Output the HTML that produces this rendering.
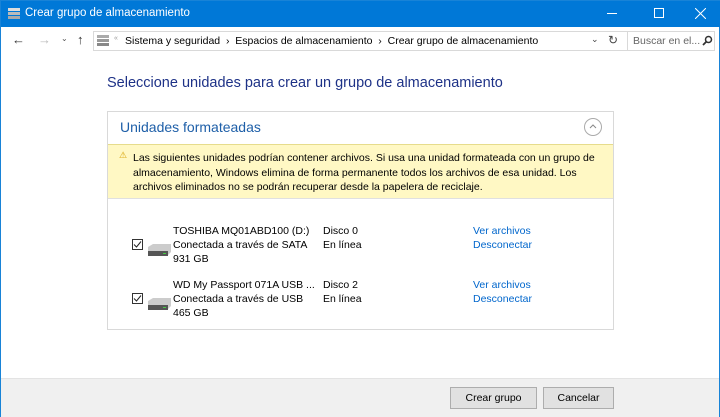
<!DOCTYPE html>
<html><head><meta charset="utf-8"><style>
*{margin:0;padding:0;box-sizing:border-box}
body{width:720px;height:417px;overflow:hidden;font-family:"Liberation Sans",sans-serif;font-size:10.5px;color:#000;background:#fff;position:relative;border:1px solid #1883d7}
.a{position:absolute;white-space:nowrap}
</style></head><body>
<div class="a" style="left:0;top:0;width:720px;height:26px;background:#0078d7"></div>
<svg class="a" style="left:6px;top:6px" width="14" height="14"><rect x="1" y="1" width="12" height="3" fill="#ddd"/><rect x="1" y="5" width="12" height="3" fill="#bbb"/><rect x="1" y="9" width="12" height="3" fill="#aaa"/></svg>
<div class="a" style="left:24px;top:6px;color:#fff;font-size:11.5px">Crear grupo de almacenamiento</div>
<div class="a" style="left:606px;top:12px;width:10px;height:1px;background:#fff"></div>
<div class="a" style="left:653px;top:7px;width:10px;height:10px;border:1px solid #fff"></div>
<svg class="a" style="left:694px;top:7px" width="11" height="11"><path d="M0 0L11 11M11 0L0 11" stroke="#fff" stroke-width="1"/></svg>
<div class="a" style="left:11px;top:31px;font-size:13px;color:#333">←</div>
<div class="a" style="left:37px;top:31px;font-size:13px;color:#bbb">→</div>
<div class="a" style="left:60px;top:33px;font-size:8px;color:#555">⌄</div>
<div class="a" style="left:76px;top:31px;font-size:13px;color:#333">↑</div>
<div class="a" style="left:92px;top:30px;width:535px;height:20px;border:1px solid #d9d9d9"></div>
<svg class="a" style="left:94px;top:32px" width="16" height="16"><rect x="2" y="2" width="12" height="3" fill="#aaa"/><rect x="2" y="6" width="12" height="3" fill="#999"/><rect x="2" y="10" width="12" height="3" fill="#888"/></svg>
<div class="a" style="left:113px;top:34px;font-size:7px;color:#999">«</div>
<div class="a" style="left:124px;top:34px;font-size:10.5px">Sistema y seguridad &nbsp;›&nbsp; Espacios de almacenamiento &nbsp;›&nbsp; Crear grupo de almacenamiento</div>
<div class="a" style="left:590px;top:33px;font-size:9px;color:#444">⌄</div>
<div class="a" style="left:607px;top:32px;font-size:12px;color:#444">↻</div>
<div class="a" style="left:626px;top:30px;width:88px;height:20px;border:1px solid #d9d9d9"></div>
<div class="a" style="left:632px;top:34px;color:#666">Buscar en el...</div>
<svg class="a" style="left:701px;top:34px" width="11" height="11"><circle cx="6.5" cy="4.5" r="3" stroke="#333" stroke-width="1.5" fill="none"/><path d="M4.5 6.5L1 10" stroke="#333" stroke-width="1.8"/></svg>
<div class="a" style="left:106px;top:74px;font-size:14.5px;color:#1e3287">Seleccione unidades para crear un grupo de almacenamiento</div>
<div class="a" style="left:106px;top:110px;width:507px;height:219px;border:1px solid #d9d9d9"></div>
<div class="a" style="left:119px;top:118px;font-size:14px;color:#1e5fa8">Unidades formateadas</div>
<div class="a" style="left:583px;top:117px;width:18px;height:18px;border:1px solid #aaa;border-radius:50%"></div>
<svg class="a" style="left:587px;top:121px" width="10" height="10"><path d="M2 6L5 3L8 6" stroke="#888" fill="none"/></svg>
<div class="a" style="left:107px;top:143px;width:505px;height:55px;background:#fff8c4;border-top:1px solid #e6dc8c;border-bottom:1px solid #e0e0e0"></div>
<div class="a" style="left:118px;top:149px;font-size:9px;color:#d6a000">⚠</div>
<div class="a" style="left:132px;top:150px;line-height:14.5px">Las siguientes unidades podrían contener archivos. Si usa una unidad formateada con un grupo de<br>almacenamiento, Windows elimina de forma permanente todos los archivos de esa unidad. Los<br>archivos eliminados no se podrán recuperar desde la papelera de reciclaje.</div>
<div class="a" style="left:131px;top:238px;width:11px;height:11px;border:1px solid #333"></div>
<svg class="a" style="left:132px;top:239px" width="9" height="9"><path d="M1 4.5L3.5 7L8 1.5" stroke="#222" fill="none"/></svg>
<svg class="a" style="left:146px;top:242px" width="26" height="14"><path d="M1 4 L6 1 H24 V9 L20 13 H1Z" fill="#ccc"/><rect x="1" y="8" width="20" height="5" fill="#555"/><rect x="16" y="10" width="3" height="1" fill="#4c4"/></svg>
<div class="a" style="left:172px;top:223px;line-height:14px">TOSHIBA MQ01ABD100 (D:)<br>Conectada a través de SATA<br>931 GB</div>
<div class="a" style="left:322px;top:223px;line-height:14px">Disco 0<br>En línea</div>
<div class="a" style="left:472px;top:223px;line-height:14px;color:#0066cc">Ver archivos<br>Desconectar</div>
<div class="a" style="left:131px;top:292px;width:11px;height:11px;border:1px solid #333"></div>
<svg class="a" style="left:132px;top:293px" width="9" height="9"><path d="M1 4.5L3.5 7L8 1.5" stroke="#222" fill="none"/></svg>
<svg class="a" style="left:146px;top:296px" width="26" height="14"><path d="M1 4 L6 1 H24 V9 L20 13 H1Z" fill="#ccc"/><rect x="1" y="8" width="20" height="5" fill="#555"/><rect x="16" y="10" width="3" height="1" fill="#4c4"/></svg>
<div class="a" style="left:172px;top:277px;line-height:14px">WD My Passport 071A USB ...<br>Conectada a través de USB<br>465 GB</div>
<div class="a" style="left:322px;top:277px;line-height:14px">Disco 2<br>En línea</div>
<div class="a" style="left:472px;top:277px;line-height:14px;color:#0066cc">Ver archivos<br>Desconectar</div>
<div class="a" style="left:0;top:377px;width:718px;height:39px;background:#f0f0f0;border-top:1px solid #e3e3e3"></div>
<div class="a" style="left:449px;top:386px;width:87px;height:22px;background:#e1e1e1;border:1px solid #adadad;text-align:center;line-height:20px">Crear grupo</div>
<div class="a" style="left:542px;top:386px;width:71px;height:22px;background:#e1e1e1;border:1px solid #adadad;text-align:center;line-height:20px">Cancelar</div>
</body></html>
